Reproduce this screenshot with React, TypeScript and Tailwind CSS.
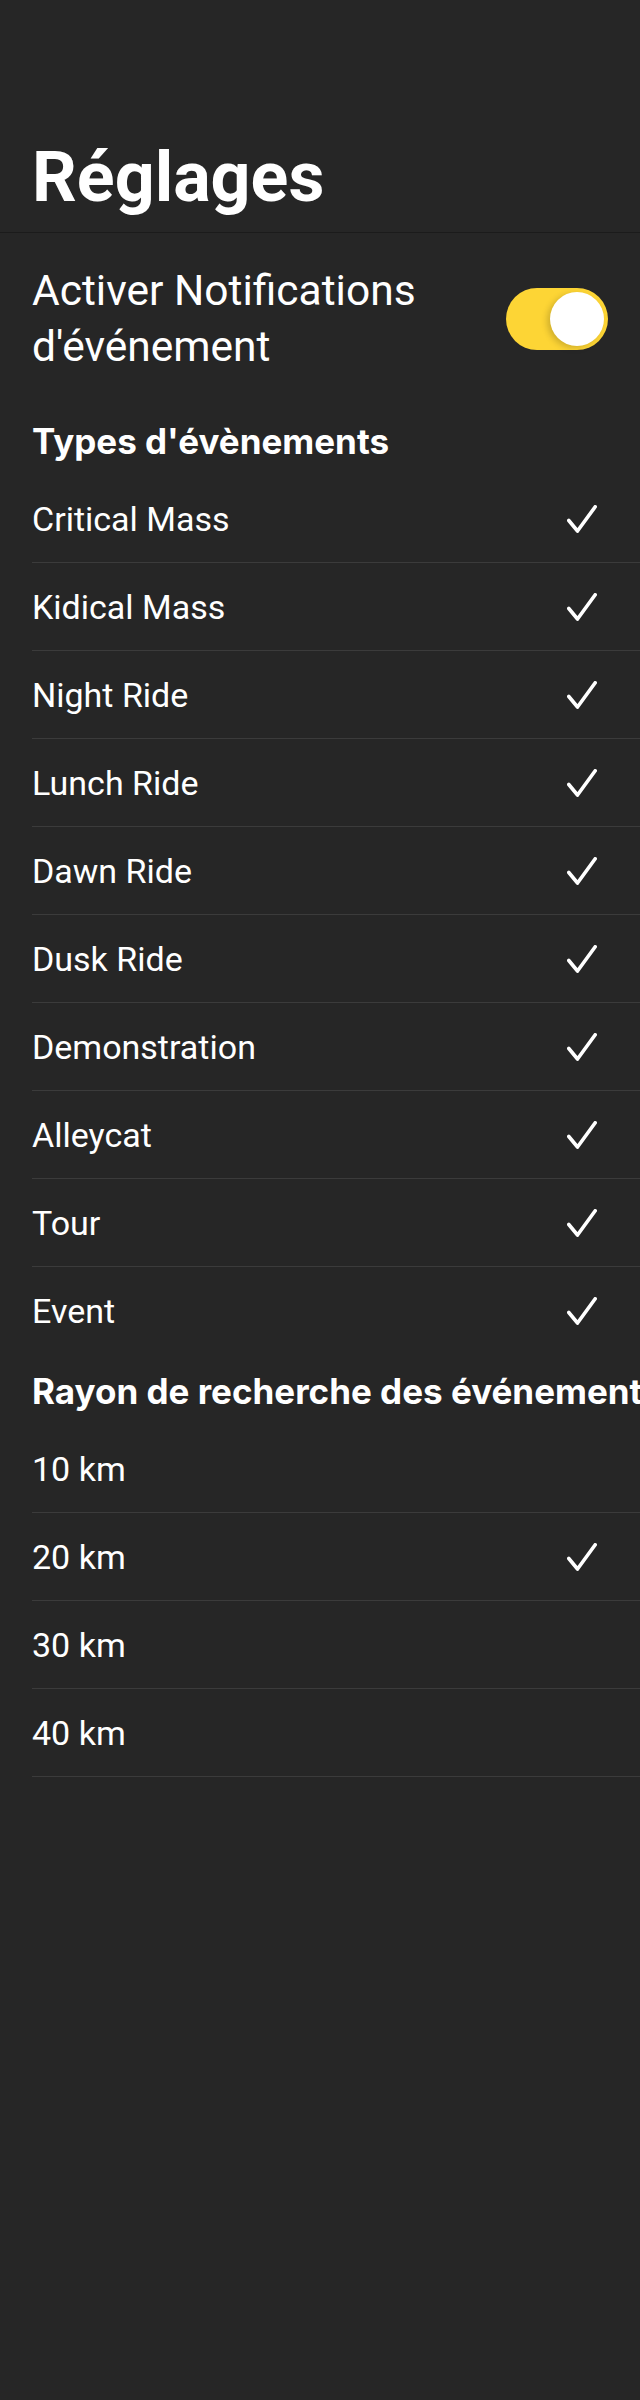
// Écran des réglages (thème sombre)

const EVENT_TYPES = [
  "Critical Mass",
  "Kidical Mass",
  "Night Ride",
  "Lunch Ride",
  "Dawn Ride",
  "Dusk Ride",
  "Demonstration",
  "Alleycat",
  "Tour",
  "Event",
];

const RADIUS_OPTIONS = [
  { label: "10 km", checked: false },
  { label: "20 km", checked: true },
  { label: "30 km", checked: false },
  { label: "40 km", checked: false },
];

function Checkmark() {
  return (
    <svg width="30" height="28" viewBox="0 0 30 28" fill="none">
      <path
        d="M1.8 15.5 L10.5 26 L28.2 1.8"
        stroke="white"
        strokeWidth="3.6"
        strokeLinecap="round"
        strokeLinejoin="round"
      />
    </svg>
  );
}

function Toggle() {
  return (
    <div className="flex h-[62px] w-[102px] shrink-0 items-center justify-end rounded-full bg-[#fdd535] pr-[4px]">
      <div className="h-[54px] w-[54px] rounded-full bg-white shadow-[-3px_2px_6px_rgba(0,0,0,0.18)]" />
    </div>
  );
}

function Row({ label, checked, last }: { label: string; checked: boolean; last?: boolean }) {
  return (
    <div
      className={`flex h-[88px] items-center justify-between pr-[43px] ${
        last ? "" : "border-b border-[#3b3b3b]"
      }`}
    >
      <span className="text-[34px] leading-[40px] text-white">{label}</span>
      {checked && <Checkmark />}
    </div>
  );
}

function SectionHeader({ title }: { title: string }) {
  return (
    <div className="pb-[14px] pl-[32px] pt-[16px]">
      <h2 className="whitespace-nowrap font-['Inter',sans-serif] text-[35px] font-bold leading-[40px] text-white">
        {title}
      </h2>
    </div>
  );
}

export default function App() {
  return (
    <div
      className="min-h-[2400px] w-[640px] overflow-hidden bg-[#262626] text-white"
      style={{ fontFamily: "Roboto, 'Liberation Sans', sans-serif" }}
    >
      {/* En-tête */}
      <div className="border-b border-[#1b1b1b] pb-[14px] pl-[32px] pt-[136px]">
        <h1 className="text-[70px] font-bold leading-[82px]">Réglages</h1>
      </div>

      {/* Notifications */}
      <div className="flex items-center justify-between py-[30px] pl-[32px] pr-[32px]">
        <p className="text-[42.5px] leading-[56px]">
          Activer Notifications
          <br />
          d'événement
        </p>
        <Toggle />
      </div>

      <SectionHeader title="Types d'évènements" />
      <div className="pl-[32px]">
        {EVENT_TYPES.map((t, i) => (
          <Row key={t} label={t} checked last={i === EVENT_TYPES.length - 1} />
        ))}
      </div>

      {/* le titre déborde à droite, comme sur l'écran d'origine */}
      <SectionHeader title="Rayon de recherche des événements" />
      <div className="pl-[32px]">
        {RADIUS_OPTIONS.map((r) => (
          <Row key={r.label} label={r.label} checked={r.checked} />
        ))}
      </div>
    </div>
  );
}
